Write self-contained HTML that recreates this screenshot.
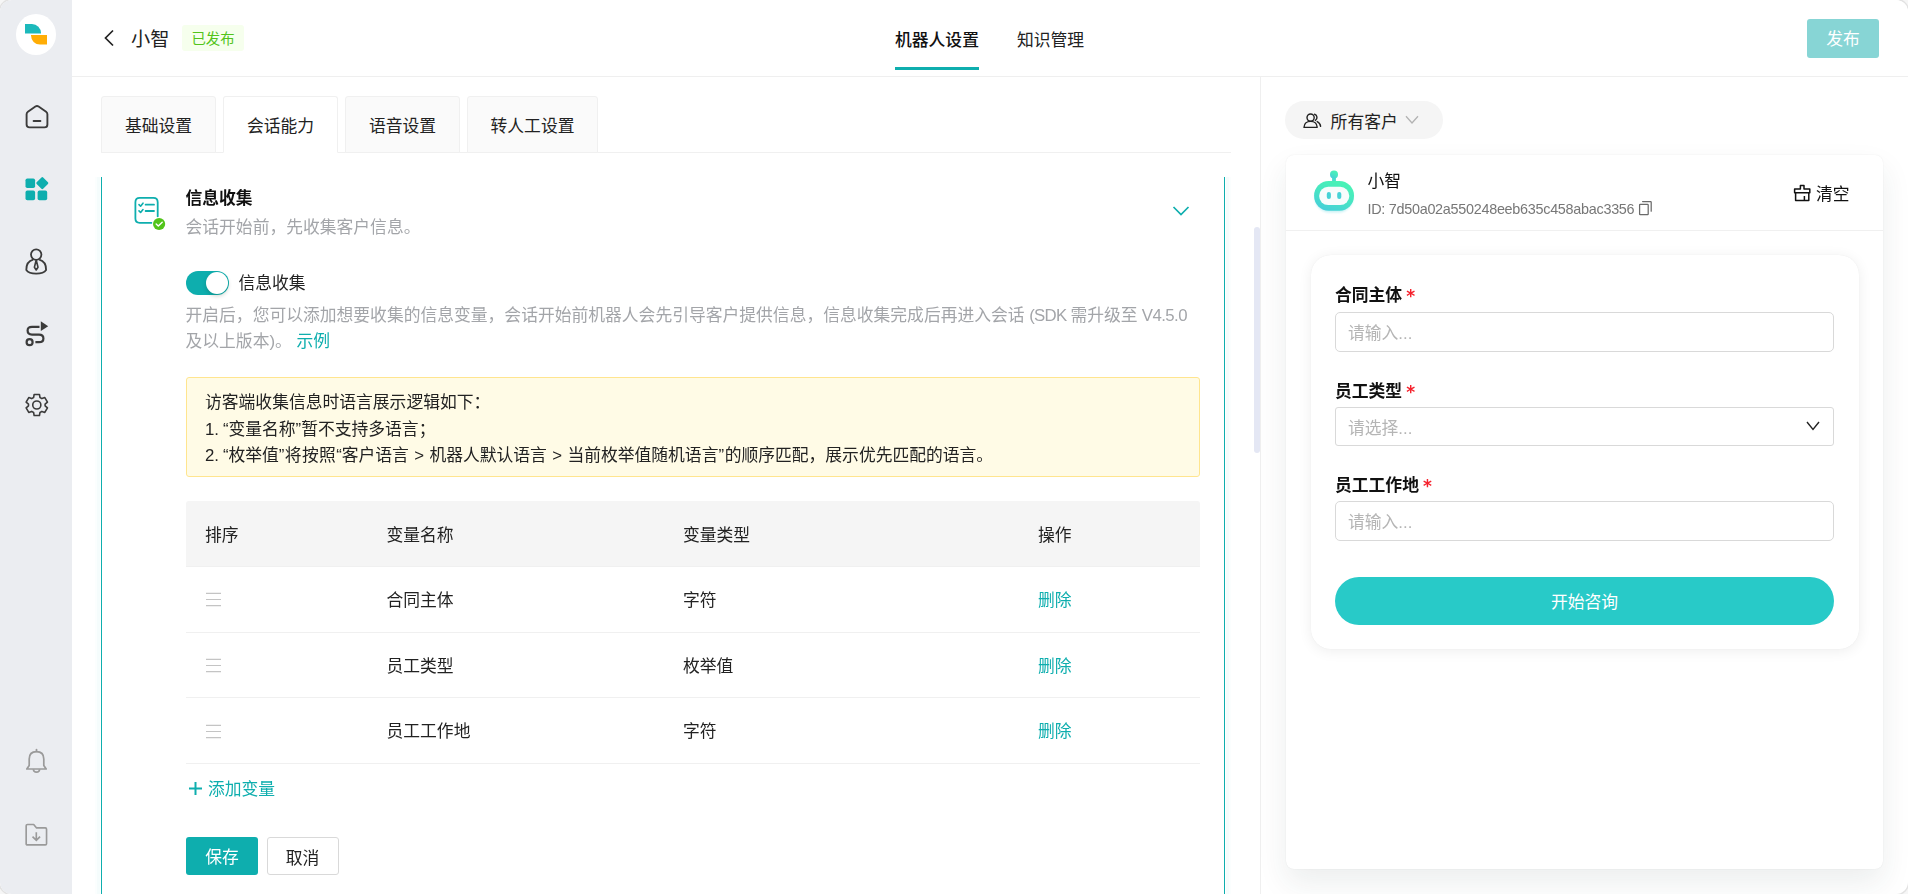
<!DOCTYPE html>
<html lang="zh-CN">
<head>
<meta charset="utf-8">
<title>机器人设置</title>
<style>
*{box-sizing:border-box;margin:0;padding:0}
html{background:#f6f6f6}
body{width:1908px;height:894px;overflow:hidden;position:relative;background:#fff;border-radius:12px;box-shadow:0 0 0 1.5px #e2e2e2;
 font-family:"Liberation Sans","Noto Sans CJK SC",sans-serif;font-size:16.8px;color:#222;line-height:26.4px}
.abs{position:absolute}
svg{display:block;overflow:visible}
.t{position:absolute;white-space:nowrap;line-height:26.4px;margin-top:2px}
.teal{color:#0eaeae}
/* sidebar */
#side{position:absolute;left:0;top:0;width:72px;height:894px;background:#ebedf1;border-radius:11px 0 0 11px}
#logo{position:absolute;left:15.8px;top:14px;width:40.6px;height:40.8px;border-radius:50%;background:#fff}
.ico{position:absolute}
/* header */
#hdr{position:absolute;left:72px;top:0;width:1836px;height:77px;border-bottom:1px solid #efefef;background:#fff;border-radius:0 11px 0 0}
#tag{position:absolute;left:182px;top:25px;width:62px;height:26px;background:#f6ffed;border-radius:3px;color:#52c41a;font-size:14.4px;line-height:29px;text-align:center}
#pub{position:absolute;left:1807px;top:19.2px;width:72px;height:38.4px;background:#87d5d5;border-radius:3px;color:#fff;text-align:center;line-height:41px;font-size:16.8px}
/* tabs */
.tab{position:absolute;top:96px;height:57px;background:#fafafa;border:1px solid #f0f0f0;border-radius:3px 3px 0 0;text-align:center;line-height:59px;font-size:16.8px;color:#222}
.tab.on{background:#fff;border-bottom-color:#fff}
#tabline{position:absolute;left:101px;top:152px;width:1130px;height:1px;background:#f0f0f0}
/* section */
#sec{position:absolute;left:101px;top:177px;width:1124px;height:740px;border-left:1.4px solid #0eaeae;border-right:1.4px solid #0eaeae}
#warn{position:absolute;left:186px;top:377px;width:1014px;height:100px;background:#fffbe6;border:1px solid #ffe58f;border-radius:3px}
#thead{position:absolute;left:186px;top:501px;width:1014px;height:66px;background:#f5f5f5;border-bottom:1px solid #f0f0f0;border-radius:3px 3px 0 0}
.rowline{position:absolute;left:186px;width:1014px;height:1px;background:#f0f0f0}
.btn{position:absolute;top:837px;width:72px;height:38px;border-radius:3px;text-align:center;line-height:41.5px;font-size:16.8px}
/* right */
#vdiv{position:absolute;left:1260px;top:77px;width:1px;height:817px;background:#efefef}
#pill{position:absolute;left:1285px;top:101px;width:158px;height:38px;border-radius:19px;background:#f5f5f5}
#card{position:absolute;left:1286px;top:155px;width:597px;height:714px;border-radius:8px;background:#fff;box-shadow:0 14px 30px rgba(40,60,60,.085),0 0 1.5px rgba(0,0,0,.10)}
#cardline{position:absolute;left:1286px;top:230px;width:597px;height:1px;background:#f0f0f0}
#form{position:absolute;left:1311px;top:255px;width:548px;height:394px;border-radius:20px;background:#fff;box-shadow:0 2px 14px rgba(0,0,0,.07),0 0 1px rgba(0,0,0,.08)}
.lab{position:absolute;left:1335px;margin-top:2px;font-weight:700;font-size:16.8px;color:#111;white-space:nowrap;line-height:26.4px}
.lab i{font-style:normal;color:#f5222d;font-weight:700;font-family:"DejaVu Sans",sans-serif;font-size:17px;line-height:20px;position:absolute;left:100%;margin-left:4px;top:3px}
.inp{position:absolute;left:1335px;width:499px;height:40px;border:1px solid #d9d9d9;border-radius:5px;background:#fff;color:#b5b5b5;font-size:16.8px;line-height:42px;padding-left:12px;overflow:hidden;white-space:nowrap}
#go{position:absolute;left:1335px;top:577px;width:499px;height:48px;border-radius:24px;background:#28cac8;color:#fff;text-align:center;line-height:52px;font-size:16.8px}
#sb{position:absolute;left:1254px;top:227px;width:6px;height:226px;border-radius:3px;background:#e4e7f4}
</style>
</head>
<body>
<!-- SIDEBAR -->
<div id="side">
  <div id="logo">
    <svg width="40" height="40" viewBox="0 0 40 40">
      <path d="M9 10 h7 a9 9 0 0 1 9 9 v0.6 h-16z" fill="#1cb9bb"/>
      <path d="M15 21 h16 v9.6 h-7 a9 9 0 0 1 -9 -9z" fill="#ffad05"/>
    </svg>
  </div>
  <!-- home -->
  <svg class="ico" style="left:25px;top:105px" width="24" height="24" viewBox="0 0 24 24"><path d="M1.6 9.2 Q1.6 7.6 2.9 6.7 L10.4 1.5 Q12 0.5 13.6 1.5 L21.1 6.7 Q22.4 7.6 22.4 9.2 V19.5 Q22.4 22.4 19.5 22.4 H4.5 Q1.6 22.4 1.6 19.5 Z" fill="none" stroke="#3b3b3b" stroke-width="1.9" stroke-linejoin="round"/><path d="M8.6 16 H15.4" stroke="#3b3b3b" stroke-width="2" stroke-linecap="round"/></svg>
  <!-- apps -->
  <svg class="ico" style="left:25px;top:177px" width="24" height="24" viewBox="0 0 24 24" fill="#0eaeae"><rect x="0.5" y="1.5" width="9.6" height="9.6" rx="1.8"/><rect x="0.5" y="13.6" width="9.6" height="9.6" rx="1.8"/><rect x="12.6" y="13.6" width="9.6" height="9.6" rx="1.8"/><rect x="12.7" y="1.6" width="9.2" height="9.2" rx="1.2" transform="rotate(45 17.3 6.2)"/></svg>
  <!-- person -->
  <svg class="ico" style="left:25px;top:247.8px" width="24" height="28" viewBox="0 0 24 28" fill="none" stroke="#3b3b3b" stroke-width="1.8" stroke-linejoin="round"><circle cx="11.2" cy="6.6" r="5.2"/><path d="M8.2 11.6 C3.5 12.8 1.2 17 1.3 22 C3 24.6 7 25.6 11.2 25.6 C15.4 25.6 19.4 24.6 21.1 22 C21.2 17 18.9 12.8 14.2 11.6"/><path d="M11.2 12 L9.4 19.2 L11.2 22 L13 19.2 Z" stroke-width="1.6"/></svg>
  <!-- route -->
  <svg class="ico" style="left:25px;top:320px" width="24" height="27" viewBox="0 0 24 27" fill="none" stroke="#3b3b3b" stroke-width="2.2"><path d="M14.5 6.8 H7 Q2.6 6.8 2.6 10.6 Q2.6 14.6 7 14.6 H14 Q18.4 14.6 18.4 18.4 Q18.4 22.2 14 22.2 H10.4"/><circle cx="4.6" cy="22.2" r="3"/><path d="M15.8 1.2 L23.2 6.2 L15.8 11 Z" fill="#3b3b3b" stroke="none"/></svg>
  <!-- gear -->
  <svg class="ico" style="left:24.6px;top:393.3px" width="23.6" height="24" viewBox="0 0 25 25" fill="none" stroke="#3b3b3b" stroke-width="1.7" stroke-linejoin="round"><path d="M9.7 1.3 H15.3 L15.9 4.6 L17.9 5.7 L21 4.6 L23.8 9.4 L21.3 11.6 V13.4 L23.8 15.6 L21 20.4 L17.9 19.3 L15.9 20.4 L15.3 23.7 H9.7 L9.1 20.4 L7.1 19.3 L4 20.4 L1.2 15.6 L3.7 13.4 V11.6 L1.2 9.4 L4 4.6 L7.1 5.7 L9.1 4.6 Z"/><circle cx="12.5" cy="12.5" r="4.3"/></svg>
  <!-- bell -->
  <svg class="ico" style="left:25px;top:748px" width="24" height="26" viewBox="0 0 24 26" fill="none" stroke="#9a9a9a" stroke-width="1.7" stroke-linejoin="round"><path d="M4.2 17.5 V11 Q4.2 3.6 11.5 3.6 Q18.8 3.6 18.8 11 V17.5 L21.2 21 H1.8 Z"/><path d="M8.4 21.2 Q8.6 24.2 11.5 24.2 Q14.4 24.2 14.6 21.2"/><path d="M11.5 3.4 V1.6" stroke-linecap="round"/></svg>
  <!-- folder -->
  <svg class="ico" style="left:25px;top:822.6px" width="23.2" height="23.4" viewBox="0 0 24 24" fill="none" stroke="#9a9a9a" stroke-width="1.7" stroke-linejoin="round"><path d="M1.2 2.8 Q1.2 1.4 2.6 1.4 H9 L12 5 H21 Q22.3 5 22.3 6.3 V21.3 Q22.3 22.6 21 22.6 H2.6 Q1.2 22.6 1.2 21.3 Z"/><path d="M11.7 9.4 V17.6 M7.8 14 L11.7 17.9 L15.6 14" stroke-linejoin="miter"/></svg>
</div>

<!-- HEADER -->
<div id="hdr"></div>
<svg class="abs" style="left:103px;top:29px" width="12" height="18" viewBox="0 0 12 18"><path d="M10 1.5 L2.5 9 L10 16.5" fill="none" stroke="#222" stroke-width="1.7"/></svg>
<div class="t" style="left:131px;top:25px;font-size:19.2px">小智</div>
<div id="tag">已发布</div>
<div class="t" style="left:895px;top:26px;font-weight:500;color:#111">机器人设置</div>
<div class="abs" style="left:895px;top:67px;width:84px;height:3px;background:#0eaeae"></div>
<div class="t" style="left:1017px;top:26px">知识管理</div>
<div id="pub">发布</div>

<!-- TABS -->
<div id="tabline"></div>
<div class="tab" style="left:101px;width:115px">基础设置</div>
<div class="tab on" style="left:223px;width:115px">会话能力</div>
<div class="tab" style="left:345px;width:115px">语音设置</div>
<div class="tab" style="left:467px;width:131px">转人工设置</div>

<!-- SECTION -->
<div id="scr" style="position:absolute;left:0;top:0;width:1250px;height:894px;will-change:transform">
<div class="abs" style="left:88px;top:177px;width:1156px;height:717px;overflow:hidden"><div class="abs" style="left:13px;top:-40px;width:1124px;height:900px;box-shadow:0 0 0 1px #fff,0 0 0 4px rgba(14,174,174,.028),0 0 0 6px rgba(14,174,174,.014)"></div></div>
<div id="sec"></div>
<div class="t" style="left:185.5px;top:184px;font-weight:700;color:#111">信息收集</div>
<div class="t" style="left:185.5px;top:213px;color:#a3a5a9">会话开始前，先收集客户信息。</div>
<svg class="abs" style="left:1172px;top:205px" width="18" height="12" viewBox="0 0 18 12"><path d="M1.5 2 L9 9.5 L16.5 2" fill="none" stroke="#0eaeae" stroke-width="1.7"/></svg>

<div class="abs" style="left:186px;top:271px;width:43px;height:24px;border-radius:12px;background:#0eaeae"></div>
<div class="abs" style="left:206px;top:272px;width:22px;height:22px;border-radius:11px;background:#fff;box-shadow:0 2px 4px rgba(0,35,11,.2)"></div>
<div class="t" style="left:238.5px;top:269px">信息收集</div>

<div class="t" style="left:185.5px;top:301px;color:#a3a5a9">开启后，您可以添加想要收集的信息变量，会话开始前机器人会先引导客户提供信息，信息收集完成后再进入会话 <span style="letter-spacing:-0.7px">(SDK </span>需升级至<span style="letter-spacing:-0.55px"> V4.5.0</span></div>
<div class="t" style="left:185.5px;top:327px;color:#a3a5a9">及以上版本)。 <span class="teal">示例</span></div>

<div id="warn"></div>
<div class="t" style="left:205px;top:388px">访客端收集信息时语言展示逻辑如下：</div>
<div class="t" style="left:205px;top:414.5px"><span style="letter-spacing:-0.2px">1. “</span>变量名称”暂不支持多语言；</div>
<div class="t" style="left:205px;top:441px"><span style="letter-spacing:-0.2px">2. “</span>枚举值<span style="letter-spacing:.35px">”将按照</span>“<span style="word-spacing:.7px">客户语言 &gt; 机器人默认语言 &gt; 当前枚举值随机语言</span><span style="letter-spacing:.6px">”</span>的顺序匹配，展示优先匹配的语言。</div>

<div id="thead"></div>
<div class="t" style="left:205px;top:521px">排序</div>
<div class="t" style="left:386.5px;top:521px">变量名称</div>
<div class="t" style="left:683px;top:521px">变量类型</div>
<div class="t" style="left:1038px;top:521px">操作</div>

<div class="rowline" style="top:632px"></div>
<div class="rowline" style="top:697px"></div>
<div class="rowline" style="top:763px"></div>

<div class="t" style="left:386.5px;top:586px">合同主体</div>
<div class="t" style="left:683px;top:586px">字符</div>
<div class="t teal" style="left:1038px;top:586px">删除</div>
<div class="t" style="left:386.5px;top:651.6px">员工类型</div>
<div class="t" style="left:683px;top:651.6px">枚举值</div>
<div class="t teal" style="left:1038px;top:651.6px">删除</div>
<div class="t" style="left:386.5px;top:717.2px">员工工作地</div>
<div class="t" style="left:683px;top:717.2px">字符</div>
<div class="t teal" style="left:1038px;top:717.2px">删除</div>

<div class="t teal" style="left:208px;top:775.3px">添加变量</div>
<div class="btn" style="left:186px;background:#0eaeae;color:#fff">保存</div>
<div class="btn" style="left:266.6px;background:#fff;border:1px solid #d9d9d9;color:#222">取消</div>


<!-- section icon -->
<svg class="abs" style="left:133px;top:196px" width="34" height="36" viewBox="0 0 34 36" fill="none" stroke="#0eaeae" stroke-width="1.8" stroke-linecap="round" stroke-linejoin="round">
  <path d="M24.7 20.5 V6.2 Q24.7 1.9 20.4 1.9 H6.7 Q2.4 1.9 2.4 6.2 V22.6 Q2.4 26.9 6.7 26.9 H18.6"/>
  <path d="M12.6 8.7 H21 M12.6 15 H21"/>
  <path d="M6 8.6 L7.6 10.2 L10 7.2 M6 14.9 L7.6 16.5 L10 13.5" stroke-width="1.6"/>
  <circle cx="26.1" cy="28" r="6.9" fill="#fff" stroke="none"/>
  <circle cx="26.1" cy="28" r="6.1" fill="#52c41a" stroke="none"/>
  <path d="M23.2 28 L25.3 30 L29.2 26.2" stroke="#fff" stroke-width="1.4"/>
</svg>
<!-- drag handles -->
<svg class="abs" style="left:206px;top:592px" width="15" height="15" viewBox="0 0 15 15" stroke="#c4c4c4" stroke-width="1.2"><path d="M0 1.4H15M0 7.5H15M0 13.6H15"/></svg>
<svg class="abs" style="left:206px;top:657.5px" width="15" height="15" viewBox="0 0 15 15" stroke="#c4c4c4" stroke-width="1.2"><path d="M0 1.4H15M0 7.5H15M0 13.6H15"/></svg>
<svg class="abs" style="left:206px;top:723.5px" width="15" height="15" viewBox="0 0 15 15" stroke="#c4c4c4" stroke-width="1.2"><path d="M0 1.4H15M0 7.5H15M0 13.6H15"/></svg>
<!-- plus -->
<svg class="abs" style="left:189px;top:782px" width="13" height="13" viewBox="0 0 13 13" stroke="#0eaeae" stroke-width="2"><path d="M6.5 0V13M0 6.5H13"/></svg>
</div>
<div id="sb"></div>

<!-- RIGHT -->
<div id="vdiv"></div>
<div id="pill"></div>
<div class="t" style="left:1330.6px;top:107.6px">所有客户</div>

<!-- team icon -->
<svg class="abs" style="left:1303px;top:113px" width="19" height="16" viewBox="0 0 19 16" fill="none" stroke="#222" stroke-width="1.4" stroke-linejoin="round">
  <circle cx="7.6" cy="4.6" r="3.6"/>
  <path d="M1 14.4 C1.2 10.6 3.8 8.4 7.6 8.4 C11.4 8.4 14 10.6 14.2 14.4 Z"/>
  <path d="M11.6 1.2 C14.4 1.8 14.8 6 12.4 7.4 M14.2 8.6 C16.4 9.6 17.4 11.2 17.6 13.4" stroke-linecap="round"/>
</svg>
<svg class="abs" style="left:1404.8px;top:114.6px" width="14" height="10" viewBox="0 0 14 10"><path d="M1 1.2 L7 8 L13 1.2" fill="none" stroke="#b3b3b3" stroke-width="1.3"/></svg>
<div id="card"></div>
<div id="cardline"></div>
<div class="t" style="left:1367.5px;top:167px;color:#111">小智</div>
<div class="t" style="left:1367.5px;top:193.5px;font-size:14.4px;color:#777;letter-spacing:-0.28px">ID: 7d50a02a550248eeb635c458abac3356</div>
<div class="t" style="left:1816px;top:180px;color:#111">清空</div>


<!-- bot avatar -->
<svg class="abs" style="left:1310px;top:168px" width="48" height="48" viewBox="0 0 48 48">
  <defs>
    <linearGradient id="bg1" x1="0.75" y1="0.1" x2="0.3" y2="1"><stop offset="0" stop-color="#49f2b6"/><stop offset="0.45" stop-color="#48e6c2"/><stop offset="1" stop-color="#45cfd9"/></linearGradient>
    <filter id="bsh" x="-20%" y="-20%" width="140%" height="150%"><feGaussianBlur stdDeviation="1.2"/></filter>
  </defs>
  <rect x="5" y="15" width="38" height="29.5" rx="14.5" fill="#45cfd9" opacity=".28" filter="url(#bsh)"/>
  <rect x="22.1" y="7" width="3.8" height="8" fill="#47dccb"/>
  <circle cx="24" cy="6.4" r="4" fill="url(#bg1)"/>
  <rect x="4.1" y="12.9" width="39.9" height="29.8" rx="14.6" fill="url(#bg1)"/>
  <rect x="9.1" y="18.8" width="30.2" height="18.3" rx="9.1" fill="#f7fcfc"/>
  <rect x="16.8" y="24.1" width="4.1" height="6.9" rx="2" fill="#47d2d6"/>
  <rect x="27.2" y="24.1" width="4.1" height="6.9" rx="2" fill="#47d2d6"/>
</svg>
<!-- copy icon -->
<svg class="abs" style="left:1638px;top:200px" width="15" height="16" viewBox="0 0 15 16" fill="none" stroke="#6a6a6a" stroke-width="1.25"><rect x="1.6" y="4.4" width="8.6" height="10.2" rx="0.6"/><path d="M4.6 1.6 H12.6 Q13.2 1.6 13.2 2.2 V11.2" stroke-linecap="round"/></svg>
<!-- clear icon -->
<svg class="abs" style="left:1793px;top:184px" width="19" height="18" viewBox="0 0 19 18" fill="none" stroke="#111" stroke-width="1.5" stroke-linejoin="round"><path d="M7.4 5 V1.6 H11 V5 H16.8 V8.8 H1.6 V5 Z"/><path d="M2.6 9 V16.4 H15.8 V9"/><path d="M11.4 12 V16.2"/></svg>
<div id="form"></div>
<div class="lab" style="top:281px">合同主体<i>*</i></div>
<div class="inp" style="top:312px">请输入...</div>
<div class="lab" style="top:377px">员工类型<i>*</i></div>
<div class="inp" style="top:407px;height:39px;border-radius:3px">请选择...</div>
<div class="lab" style="top:471px">员工工作地<i>*</i></div>
<div class="inp" style="top:501px">请输入...</div>
<div id="go">开始咨询</div>
<!-- select chevron -->
<svg class="abs" style="left:1806px;top:421px" width="14" height="10" viewBox="0 0 14 10"><path d="M1 1 L7 8.4 L13 1" fill="none" stroke="#222" stroke-width="1.4"/></svg>

</body>
</html>
